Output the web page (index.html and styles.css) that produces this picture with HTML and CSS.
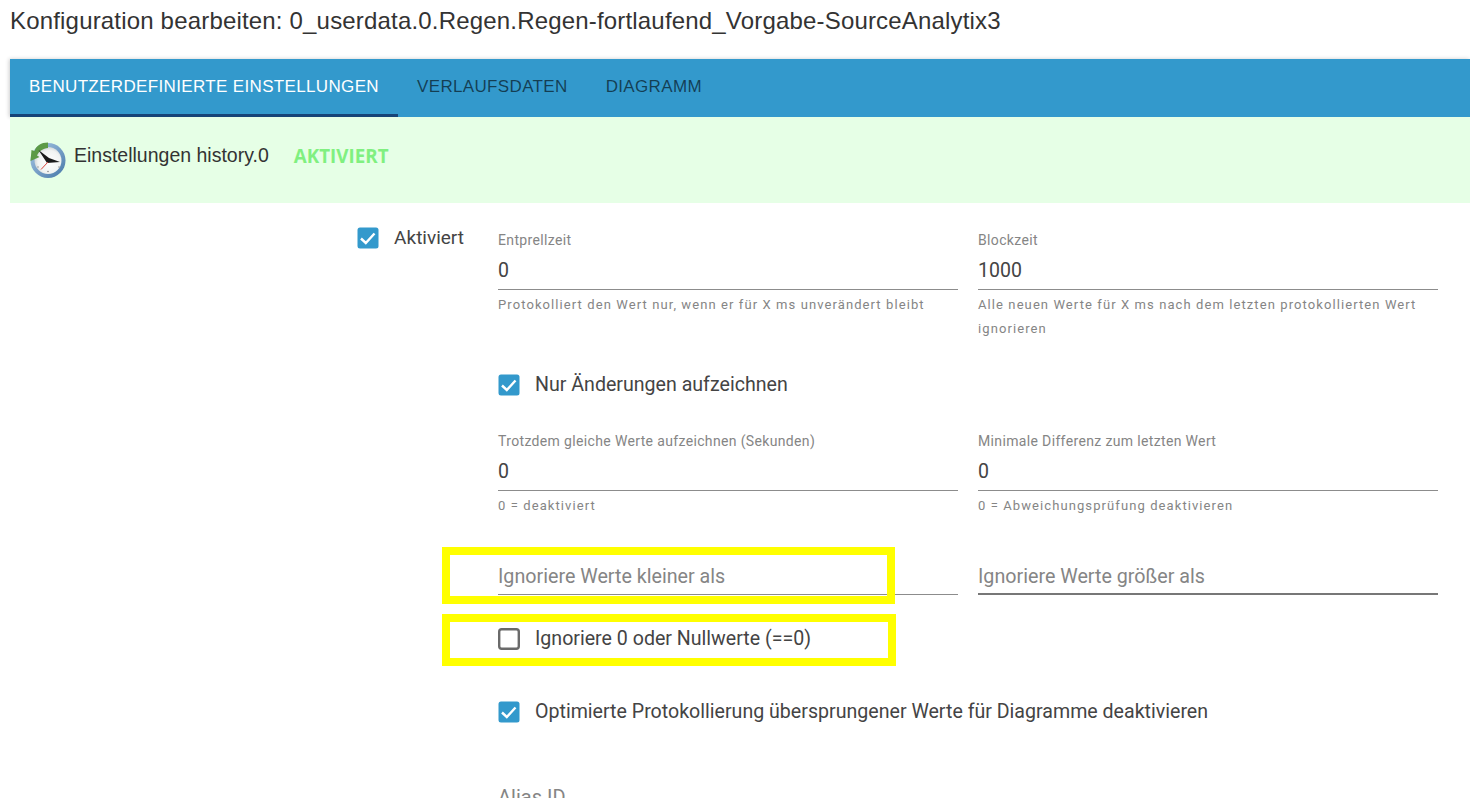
FILE: index.html
```html
<!DOCTYPE html>
<html lang="de">
<head>
<meta charset="utf-8">
<title>Konfiguration bearbeiten</title>
<link rel="stylesheet" href="styles.css">
</head>
<body>
<h1 class="title">Konfiguration bearbeiten: 0_userdata.0.Regen.Regen-fortlaufend_Vorgabe-SourceAnalytix3</h1>
<div class="panel">
  <nav class="tabs">
    <a class="tab tab-active">Benutzerdefinierte Einstellungen</a>
    <a class="tab">Verlaufsdaten</a>
    <a class="tab">Diagramm</a>
  </nav>
  <div class="banner">
    <svg class="clock" viewBox="0 0 36 36" width="36" height="36" aria-hidden="true">
      <defs>
        <radialGradient id="face" cx="0.55" cy="0.55" r="0.6"><stop offset="0" stop-color="#ffffff"/><stop offset="0.7" stop-color="#f1f3f2"/><stop offset="1" stop-color="#c4cbcf"/></radialGradient>
        <linearGradient id="rim" x1="0" y1="0" x2="1" y2="1"><stop offset="0" stop-color="#a9c9e6"/><stop offset="1" stop-color="#4677a8"/></linearGradient>
      </defs>
      <circle cx="18" cy="18.500" r="17.500" fill="url(#rim)"/>
      <circle cx="18" cy="18.500" r="13.500" fill="url(#face)"/>
      <path d="M18 0.500C11 0.500 6.500 3.500 4.500 9L1.500 8L0.500 19L9.500 15L7 13.500C9 9 13 6.500 18 6Z" fill="#5c9a46"/>
      <path d="M8.500 8L19 16L30 20L17 21Z" fill="#1a1a1a"/>
      <path d="M18 20L11 27.500" stroke="#d9433c" stroke-width="1"/>
      <circle cx="18" cy="29.500" r="0.800" fill="#888"/>
      <circle cx="29" cy="25" r="0.700" fill="#888"/>
      <circle cx="8" cy="25" r="0.700" fill="#888"/>
    </svg>
    <span class="banner-name">Einstellungen history.0</span>
    <span class="banner-state">AKTIVIERT</span>
  </div>
  <form class="form">
    <label class="check check-main">
      <svg class="box" viewBox="0 0 22 22" width="22" height="22" aria-hidden="true"><rect x="0.500" y="0.500" width="21" height="21" rx="2.500" fill="#3399cc"/><path d="M4 11.500L8.800 16L17.500 6.500" fill="none" stroke="#fff" stroke-width="2.400"/></svg>
      <span>Aktiviert</span>
    </label>
    <div class="fields">
      <div class="row row-first">
        <div class="field"><span class="label">Entprellzeit</span><span class="value">0</span><span class="help">Protokolliert den Wert nur, wenn er für X ms unverändert bleibt</span></div>
        <div class="field"><span class="label">Blockzeit</span><span class="value">1000</span><span class="help">Alle neuen Werte für X ms nach dem letzten protokollierten Wert ignorieren</span></div>
      </div>
      <label class="check check-changes">
        <svg class="box" viewBox="0 0 22 22" width="22" height="22" aria-hidden="true"><rect x="0.500" y="0.500" width="21" height="21" rx="2.500" fill="#3399cc"/><path d="M4 11.500L8.800 16L17.500 6.500" fill="none" stroke="#fff" stroke-width="2.400"/></svg>
        <span>Nur Änderungen aufzeichnen</span>
      </label>
      <div class="row row-second">
        <div class="field"><span class="label">Trotzdem gleiche Werte aufzeichnen (Sekunden)</span><span class="value">0</span><span class="help">0 = deaktiviert</span></div>
        <div class="field"><span class="label">Minimale Differenz zum letzten Wert</span><span class="value">0</span><span class="help">0 = Abweichungsprüfung deaktivieren</span></div>
      </div>
      <div class="row row-third">
        <div class="field-plain"><span class="placeholder">Ignoriere Werte kleiner als</span></div>
        <div class="field-plain field-strong"><span class="placeholder">Ignoriere Werte größer als</span></div>
      </div>
      <label class="check check-zero">
        <svg class="box box-empty" viewBox="0 0 22 22" width="22" height="22" aria-hidden="true"><rect x="1.200" y="1.200" width="19.600" height="19.600" rx="2.500" fill="#fff" stroke="#6a6a6a" stroke-width="2.400"/></svg>
        <span>Ignoriere 0 oder Nullwerte (==0)</span>
      </label>
      <label class="check check-opt">
        <svg class="box" viewBox="0 0 22 22" width="22" height="22" aria-hidden="true"><rect x="0.500" y="0.500" width="21" height="21" rx="2.500" fill="#3399cc"/><path d="M4 11.500L8.800 16L17.500 6.500" fill="none" stroke="#fff" stroke-width="2.400"/></svg>
        <span>Optimierte Protokollierung übersprungener Werte für Diagramme deaktivieren</span>
      </label>
      <div class="alias">Alias ID</div>
    </div>
  </form>
</div>
<div class="mark mark-one"></div>
<div class="mark mark-two"></div>
</body>
</html>
```

FILE: styles.css
```css
html, body {
  margin: 0;
  height: 798px;
  overflow: hidden;
  background: #fff;
}
body {
  position: relative;
  font-family: Roboto, "Liberation Sans", sans-serif;
  color: rgba(0, 0, 0, 0.87);
}
.title {
  margin: 0;
  height: 59px;
  padding: 7px 0 0 10px;
  box-sizing: border-box;
  font: 400 24px/28px "Liberation Sans", Arial, sans-serif;
  letter-spacing: 0.18px;
  color: #333;
  white-space: nowrap;
}
.panel {
  margin-left: 10px;
}
.tabs {
  display: flex;
  height: 58px;
  background: #3399cc;
  box-shadow: -1px 0 4px rgba(0, 0, 0, 0.2);
}
.tab {
  display: flex;
  align-items: center;
  box-sizing: border-box;
  padding: 0 19px;
  font: 400 17px/1 "Liberation Sans", Arial, sans-serif;
  letter-spacing: 0.35px;
  text-transform: uppercase;
  color: rgba(0, 0, 0, 0.6);
  border-bottom: 3px solid transparent;
}
.tab-active {
  color: #fff;
  border-bottom-color: #164477;
}
.banner {
  display: flex;
  align-items: flex-start;
  height: 86px;
  box-sizing: border-box;
  padding: 25px 0 0 20px;
  background: #e6ffe6;
  font-family: "Liberation Sans", Arial, sans-serif;
}
.clock {
  flex: none;
}
.banner-name {
  margin: 2px 0 0 8px;
  font-size: 19.500px;
  line-height: 22px;
  color: #333;
}
.banner-state {
  margin: 3px 0 0 25px;
  font-family: "Open Sans", sans-serif;
  font-size: 18.800px;
  font-weight: 700;
  line-height: 22px;
  color: #80f080;
}
.form {
  display: flex;
  align-items: flex-start;
}
.check {
  display: flex;
  align-items: center;
  gap: 15px;
  font-size: 19.600px;
  line-height: 24px;
  color: #444;
}
.box {
  flex: none;
}
.check-main {
  width: 488px;
  box-sizing: border-box;
  justify-content: flex-end;
  gap: 15px;
  padding: 23px 34px 0 0;
  font-size: 19px;
}
.fields {
  width: 940px;
  padding-top: 29px;
}
.row {
  display: grid;
  grid-template-columns: 460px 460px;
  column-gap: 20px;
}
.field {
  display: flex;
  flex-direction: column;
}
.label {
  font-size: 14px;
  line-height: 16px;
  letter-spacing: 0.35px;
  color: #858585;
}
.value {
  height: 35px;
  margin-top: 7px;
  box-sizing: border-box;
  border-bottom: 1px solid #8c8c8c;
  font-size: 19.500px;
  line-height: 32px;
  color: #444;
}
.help {
  margin-top: 3px;
  font-size: 13px;
  line-height: 24px;
  letter-spacing: 1.09px;
  color: #858585;
}
.check-changes {
  margin-top: 32px;
}
.row-second {
  margin-top: 36px;
}
.row-third {
  margin-top: 43px;
}
.field-plain {
  height: 34px;
  box-sizing: border-box;
  border-bottom: 1px solid #8c8c8c;
}
.field-strong {
  border-bottom: 2px solid #777;
}
.placeholder {
  font-size: 19.700px;
  line-height: 32px;
  color: #858585;
}
.check-zero {
  margin-top: 32px;
}
.check-opt {
  margin-top: 49px;
}
.alias {
  margin-top: 61px;
  font-size: 20px;
  line-height: 24px;
  color: #858585;
}
.mark {
  position: absolute;
  left: 442px;
  box-sizing: border-box;
  border: 8px solid #ffff00;
}
.mark-one {
  top: 547px;
  width: 453px;
  height: 57px;
}
.mark-two {
  top: 614px;
  width: 454px;
  height: 52px;
}
```
